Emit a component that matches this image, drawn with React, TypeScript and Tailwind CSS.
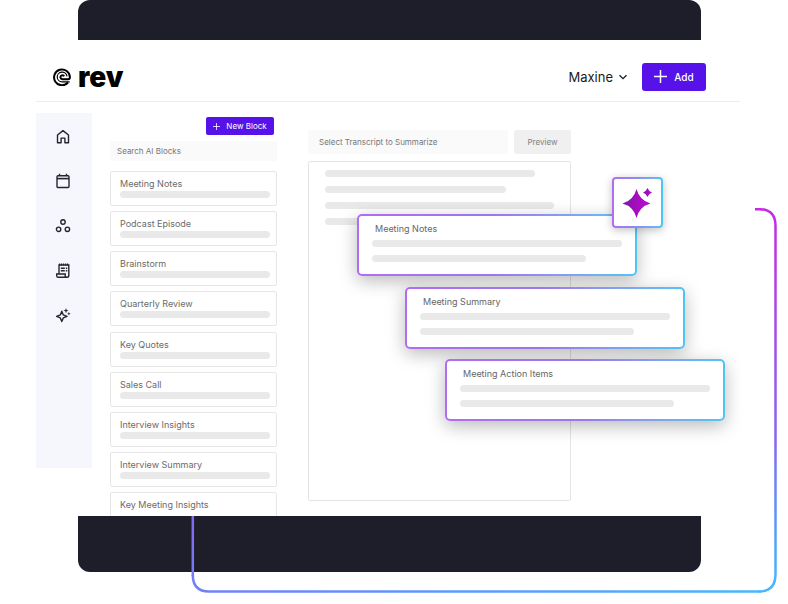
import React from "react";

const blocks = [
  "Meeting Notes",
  "Podcast Episode",
  "Brainstorm",
  "Quarterly Review",
  "Key Quotes",
  "Sales Call",
  "Interview Insights",
  "Interview Summary",
  "Key Meeting Insights",
];

const results = [
  { title: "Meeting Notes", place: "left-[48px] top-[52px]" },
  { title: "Meeting Summary", place: "left-[96px] top-[125px]" },
  { title: "Meeting Action Items", place: "left-[136px] top-[197px]" },
];

function Icon({ children }: { children: React.ReactNode }) {
  return (
    <svg
      viewBox="0 0 16 16"
      className="size-4"
      fill="none"
      stroke="currentColor"
      strokeWidth="1.400"
      aria-hidden="true"
    >
      {children}
    </svg>
  );
}

const nav = [
  {
    label: "Home",
    icon: (
      <Icon>
        <path d="M2.500 7 8 2.600l5.500 4.400V14.800H9.900V10.100H6.100V14.800H2.500Z" strokeLinejoin="round" />
      </Icon>
    ),
  },
  {
    label: "Calendar",
    icon: (
      <Icon>
        <rect x="2" y="2.800" width="12" height="11.700" rx="1" />
        <path d="M2 5.600h12" strokeWidth="1.600" />
        <path d="M4.500 .8v2M11.500 .8v2" />
      </Icon>
    ),
  },
  {
    label: "Workspaces",
    icon: (
      <Icon>
        <circle cx="8" cy="4" r="2.200" />
        <circle cx="3.600" cy="11.300" r="2.200" />
        <circle cx="12.400" cy="11.300" r="2.200" />
      </Icon>
    ),
  },
  {
    label: "Transcripts",
    icon: (
      <Icon>
        <path d="M4 11V2h9.800v10.500a1.800 1.800 0 0 1-1.800 1.800H3.300a1.600 1.600 0 0 1-1.600-1.600V11h8.500v1.800a1.500 1.500 0 0 0 1.500 1.500" />
        <path d="M4 1.500h10" strokeWidth="1.800" strokeDasharray="1.200 .8" />
        <path d="M5.800 5.200h4M5.800 7.800h4M10.800 5.200h1.500M10.800 7.800h1.500" />
      </Icon>
    ),
  },
  {
    label: "AI Blocks",
    icon: (
      <Icon>
        <path d="M6.800 3.200 8.300 6.900 12 8.400 8.300 9.900 6.800 13.600 5.300 9.900 1.600 8.400l3.700-1.500Z" strokeLinejoin="round" />
        <path d="m11 0 .7 1.900 1.900.7-1.900.7L11 5.200l-.7-1.900-1.900-.7 1.900-.7ZM13.900 4l.5 1.200 1.200.5-1.200.5-.5 1.200-.5-1.200-1.200-.5 1.200-.5Z" fill="currentColor" stroke="none" />
      </Icon>
    ),
  },
];

function Bar({ width = "w-full" }: { width?: string }) {
  return <span className={`block h-[7px] rounded-full bg-[#e9e9e9] ${width}`} />;
}

function Logo() {
  return (
    <a href="#" className="flex items-center gap-[7px]" aria-label="rev">
      <svg viewBox="0 0 18 18" className="size-[18px]" fill="none" stroke="#000" aria-hidden="true">
        <path d="M15 14.500A7.900 7.900 0 1 1 16.900 9.300c0 1.400-.7 2-1.900 2H9.500a2 2 0 1 1 1.700-3" strokeWidth="2" />
        <path d="M16.700 13.900H9.300a4.900 4.900 0 1 1 4.700-5.500" strokeWidth="1.200" />
      </svg>
      <span className="text-[28px] leading-8 font-black text-black">rev</span>
    </a>
  );
}

function ResultCard({ title, place }: { title: string; place: string }) {
  return (
    <article
      className={`absolute ${place} w-[280px] rounded-[5px] bg-linear-to-r from-[#b16cf3] via-[#9c78ec] via-50% to-[#4cc5f5] p-[2px] shadow-[0_5px_18px_rgba(0,0,0,0.27)]`}
    >
      <div className="flex h-[58px] flex-col rounded-[3px] bg-white px-[13px] pt-[7px]">
        <h2 className="ml-[3px] text-[9px] leading-3 text-[#666]">{title}</h2>
        <div className="mt-[5px] flex flex-col gap-2">
          <Bar width="w-[250px]" />
          <Bar width="w-[214px]" />
        </div>
      </div>
    </article>
  );
}

export default function App() {
  return (
    <div className="relative min-h-screen overflow-hidden bg-white font-['Inter',sans-serif]">
      <div className="mr-[87px] ml-[78px] h-10 rounded-t-xl bg-[#1d1e2a]" />

      <div className="mr-12 ml-9">
        <header className="flex h-[62px] items-center justify-between border-b border-[#ececee] pt-3 pr-[34px] pl-[17px]">
          <Logo />
          <div className="flex items-center gap-[14px]">
            <button className="flex items-center gap-[5px] text-[13px] leading-4 text-[#1b1b22]">
              Maxine
              <svg viewBox="0 0 10 10" className="size-[10px]" fill="none" stroke="currentColor" strokeWidth="1.300" aria-hidden="true">
                <path d="m1.500 3.200 3.500 3.500 3.500-3.500" />
              </svg>
            </button>
            <button className="flex h-7 w-16 items-center justify-center gap-[7px] rounded-[3px] bg-[#5612e8] text-[10px] leading-4 font-medium text-white">
              <svg viewBox="0 0 13 13" className="size-[13px]" fill="none" stroke="currentColor" strokeWidth="1.500" aria-hidden="true">
                <path d="M6.500 0v13M0 6.500h13" />
              </svg>
              Add
            </button>
          </div>
        </header>

        <div className="flex h-[414px] items-start pt-[11px]">
          <nav className="flex h-[355px] w-14 shrink-0 flex-col items-center gap-[29px] bg-[#f6f7fc] pt-[15px] pr-[2px] text-[#25252f]">
            {nav.map((item) => (
              <a key={item.label} href="#" aria-label={item.label} className="block">
                {item.icon}
              </a>
            ))}
          </nav>

          <section className="ml-[18px] flex h-[403px] w-[167px] shrink-0 flex-col overflow-hidden pt-1">
            <button className="mr-[3px] flex h-[18px] w-[68px] shrink-0 items-center justify-center gap-[6px] self-end rounded-[2px] bg-[#5612e8] text-[8px] leading-3 whitespace-nowrap text-white">
              <svg viewBox="0 0 7 7" className="size-[7px]" fill="none" stroke="currentColor" strokeWidth=".8" aria-hidden="true">
                <path d="M3.500 0v7M0 3.500h7" />
              </svg>
              New Block
            </button>
            <input
              type="search"
              aria-label="Search AI Blocks"
              placeholder="Search AI Blocks"
              className="mt-[6px] h-5 w-full shrink-0 rounded-[2px] bg-[#fafafa] px-[7px] text-[8px] leading-3 placeholder:text-[#777]"
            />
            <ul className="mt-[10px] flex h-[356px] shrink-0 flex-col justify-between">
              {blocks.map((name, index) => (
                <li key={name}>
                  <button className="flex h-[35px] w-full flex-col gap-px rounded-[2px] border border-[#e6e6e6] pt-[6px] pr-[6px] pl-[9px] text-left text-[9px] leading-3 text-[#6b6b6b]">
                    {name}
                    {index < blocks.length - 1 && <Bar />}
                  </button>
                </li>
              ))}
            </ul>
          </section>

          <main className="ml-[31px] w-[263px] shrink-0 pt-[17px]">
            <div className="flex gap-[6px]">
              <select
                aria-label="Transcript"
                className="h-6 w-[200px] appearance-none rounded-[2px] bg-[#fafafa] px-[11px] text-[8px] leading-3 text-[#777]"
              >
                <option>Select Transcript to Summarize</option>
              </select>
              <button className="h-6 flex-1 rounded-[2px] bg-[#f0f0f0] text-[8px] leading-3 text-[#808080]">
                Preview
              </button>
            </div>
            <div className="relative mt-[7px] h-[340px] rounded-[2px] border border-[#e4e4e4]">
              <div className="flex flex-col gap-[9px] px-4 pt-2">
                <Bar width="w-[210px]" />
                <Bar width="w-[181px]" />
                <Bar width="w-[229px]" />
                <Bar width="w-[181px]" />
              </div>
              {results.map((result) => (
                <ResultCard key={result.title} {...result} />
              ))}
              <div className="absolute top-[15px] left-[303px] size-[51px] rounded-[4px] bg-linear-to-r from-[#b16cf3] via-[#8c8cf0] via-50% to-[#4cc5f5] p-[2px] shadow-[0_2px_8px_rgba(0,0,0,0.25)]">
                <div className="size-full rounded-[2px] bg-white">
                  <svg viewBox="0 0 47 47" className="size-full" aria-hidden="true">
                    <defs>
                      <linearGradient id="spark" x1="0" x2="1">
                        <stop stopColor="#7d18a8" />
                        <stop offset=".55" stopColor="#a80cc0" />
                        <stop offset="1" stopColor="#b40fd0" />
                      </linearGradient>
                    </defs>
                    <path d="M22.500 10Q25.500 21.500 36.500 24.500 25.500 27.500 22.500 39 19.500 27.500 8.500 24.500 19.500 21.500 22.500 10Z" fill="url(#spark)" />
                    <path d="M33.500 9Q34.800 12.300 38 13.500 34.800 14.700 33.500 18 32.200 14.700 29 13.500 32.200 12.300 33.500 9Z" fill="url(#spark)" />
                  </svg>
                </div>
              </div>
            </div>
          </main>
        </div>
      </div>

      <div className="relative mr-[87px] ml-[78px] h-14 rounded-b-xl bg-[#1d1e2a]">
        <svg
          viewBox="-2 0 588 386"
          className="pointer-events-none absolute -right-[76px] -bottom-[22px] h-[386px] w-[588px]"
          fill="none"
          aria-hidden="true"
        >
          <defs>
            <linearGradient id="frameStart" gradientUnits="userSpaceOnUse" x1="0" y1="308" x2="0" y2="384">
              <stop stopColor="#8468f0" />
              <stop offset="1" stopColor="#7180f8" />
            </linearGradient>
            <linearGradient id="frameBase" gradientUnits="userSpaceOnUse" x1="0" y1="0" x2="584" y2="0">
              <stop stopColor="#7180f8" />
              <stop offset="1" stopColor="#48b8fc" />
            </linearGradient>
            <linearGradient id="frameSide" gradientUnits="userSpaceOnUse" x1="0" y1="0" x2="0" y2="384">
              <stop stopColor="#c728e4" />
              <stop offset=".25" stopColor="#ad43ea" />
              <stop offset=".6" stopColor="#8566f4" />
              <stop offset=".85" stopColor="#559ef9" />
              <stop offset="1" stopColor="#48b8fc" />
            </linearGradient>
          </defs>
          <path d="M1.800 308V368" stroke="url(#frameStart)" strokeWidth="2.500" />
          <path d="M1.800 367Q1.800 383.500 18 383.500H570" stroke="url(#frameBase)" strokeWidth="2.500" />
          <path d="M564 1.200H568Q584.500 1.200 584.500 18V366Q584.500 383.500 568 383.500" stroke="url(#frameSide)" strokeWidth="2.500" />
        </svg>
      </div>
    </div>
  );
}
